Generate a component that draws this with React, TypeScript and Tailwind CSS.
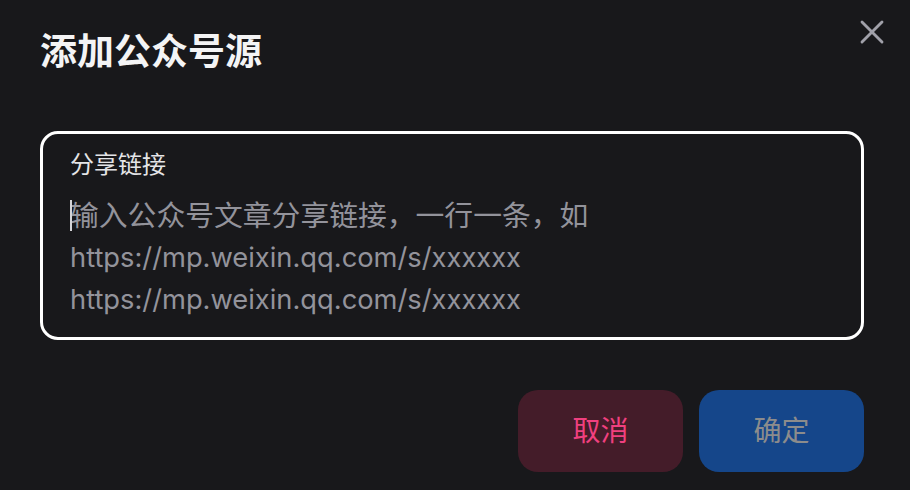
import { X } from 'lucide-react'

const font = { fontFamily: 'Inter, "Noto Sans CJK SC", sans-serif' }

export default function App() {
  return (
    <div
      style={font}
      className="relative flex h-[490px] w-[910px] flex-col bg-[#18181b] pl-10 pr-[46px] pt-[30px]"
    >
      <h1 className="text-[37px] font-bold leading-[44px] text-[#f4f4f5]">添加公众号源</h1>
      <button className="absolute right-[18px] top-[12px] text-[#a1a1aa]">
        <X size={40} strokeWidth={1.7} />
      </button>

      <div className="mt-[57px] flex h-[209px] flex-col rounded-[18px] border-[3px] border-white px-[27px] pt-[15px]">
        <label className="text-[24px] leading-[32px] text-[#e4e4e7]">分享链接</label>
        <div className="mt-[14px] text-[27.3px] leading-[42px] text-[#93939b]">
          <div className="relative text-[28.8px]">
            <span className="absolute left-0 top-[5px] h-[31px] w-[2px] bg-[#d4d4d8]" />
            输入公众号文章分享链接，一行一条，如
          </div>
          <div>https://mp.weixin.qq.com/s/xxxxxx</div>
          <div>https://mp.weixin.qq.com/s/xxxxxx</div>
        </div>
      </div>

      <div className="mt-[50px] flex justify-end gap-4">
        <button className="h-[82px] w-[165px] rounded-[20px] bg-[#441c29] text-[28px] text-[#f0407f]">
          取消
        </button>
        <button className="h-[82px] w-[165px] rounded-[20px] bg-[#15468a] text-[28px] text-[#8c8c8c]">
          确定
        </button>
      </div>
    </div>
  )
}
